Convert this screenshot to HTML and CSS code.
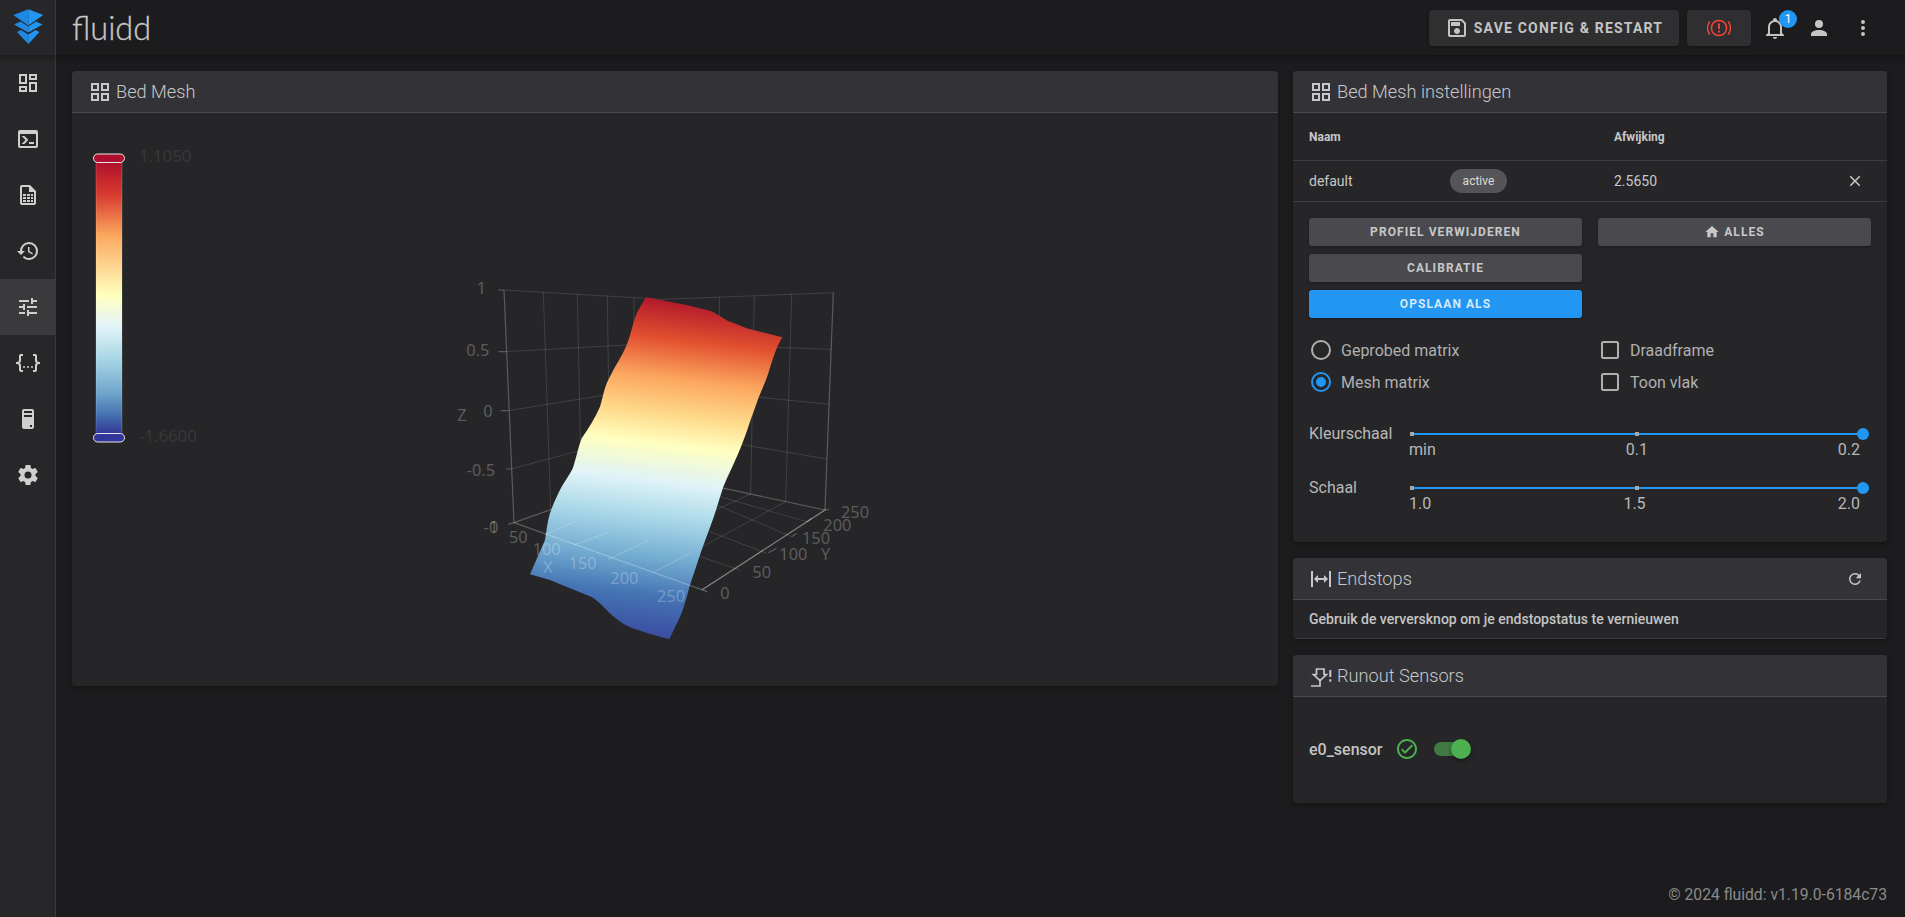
FILE: index.html
```html
<!DOCTYPE html>
<html lang="nl">
<head>
<meta charset="utf-8">
<title>fluidd</title>
<link rel="stylesheet" href="styles.css">
</head>
<body>
<header class="appbar">
  <div class="logo-box">
    <svg class="logo" viewBox="0 0 55 55" width="55" height="55">
      <polygon class="blue-b" points="13.3,15 28.3,9.3 28.3,25.5"/>
      <polygon class="blue-a" points="43.3,15 28.3,9.3 28.3,25.5"/>
      <polygon class="blue-b" points="14,24.5 20.5,21.5 28.3,26.5 28.3,32.5"/>
      <polygon class="blue-a" points="42.5,24.5 36,21.5 28.3,26.5 28.3,32.5"/>
      <polygon class="blue-b" points="17,32 21,30 28.3,34.5 28.3,44"/>
      <polygon class="blue-a" points="39.5,32 35.5,30 28.3,34.5 28.3,44"/>
    </svg>
  </div>
  <div class="brand">fluidd</div>
  <div class="spacer"></div>
  <button class="bar-btn save-btn">
    <svg class="i24" viewBox="0 0 24 24"><path d="M17 3H5C3.89 3 3 3.9 3 5V19C3 20.1 3.89 21 5 21H19C20.1 21 21 20.1 21 19V7L17 3M19 19H5V5H16.17L19 7.83V19M12 12C10.34 12 9 13.34 9 15S10.34 18 12 18 15 16.66 15 15 13.66 12 12 12M6 6H15V10H6V6Z"/></svg>
    <span>SAVE CONFIG &amp; RESTART</span>
  </button>
  <button class="bar-btn brake-btn">
    <svg class="i24 red" viewBox="0 0 24 24"><circle class="ring thin" cx="12" cy="12" r="7.6"/><path class="ring thin" d="M2.8 5.4A11.5 11.5 0 0 0 2.8 18.6M21.2 5.4A11.5 11.5 0 0 1 21.2 18.6"/><path d="M11 7.5H13V13H11ZM11 14.6H13V16.6H11Z"/></svg>
  </button>
  <div class="icon-btn">
    <svg class="i24" viewBox="0 0 24 24"><path d="M10 21H14C14 22.1 13.1 23 12 23S10 22.1 10 21M21 19V20H3V19L5 17V11C5 7.9 7 5.2 10 4.3V4C10 2.9 10.9 2 12 2S14 2.9 14 4V4.3C17 5.2 19 7.9 19 11V17L21 19M17 11C17 8.2 14.8 6 12 6S7 8.2 7 11V18H17V11Z"/></svg>
    <span class="badge">1</span>
  </div>
  <div class="icon-btn">
    <svg class="i24" viewBox="0 0 24 24"><path d="M12,4A4,4 0 0,1 16,8A4,4 0 0,1 12,12A4,4 0 0,1 8,8A4,4 0 0,1 12,4M12,14C16.42,14 20,15.79 20,18V20H4V18C4,15.79 7.58,14 12,14Z"/></svg>
  </div>
  <div class="icon-btn">
    <svg class="i24" viewBox="0 0 24 24"><path d="M12,16A2,2 0 0,1 14,18A2,2 0 0,1 12,20A2,2 0 0,1 10,18A2,2 0 0,1 12,16M12,10A2,2 0 0,1 14,12A2,2 0 0,1 12,14A2,2 0 0,1 10,12A2,2 0 0,1 12,10M12,4A2,2 0 0,1 14,6A2,2 0 0,1 12,8A2,2 0 0,1 10,6A2,2 0 0,1 12,4Z"/></svg>
  </div>
</header>

<div class="shell">
  <nav class="sidebar">
    <a class="nav-item"><svg class="i24" viewBox="0 0 24 24"><path d="M19,5V7H15V5H19M9,5V11H5V5H9M19,13V19H15V13H19M9,17V19H5V17H9M21,3H13V9H21V3M11,3H3V13H11V3M21,11H13V21H21V11M11,15H3V21H11V15Z"/></svg></a>
    <a class="nav-item"><svg class="i24" viewBox="0 0 24 24"><path d="M20,19V7H4V19H20M20,3A2,2 0 0,1 22,5V19A2,2 0 0,1 20,21H4A2,2 0 0,1 2,19V5C2,3.89 2.9,3 4,3H20M13,17V15H18V17H13M9.58,13L5.57,9H8.4L11.7,12.3C12.09,12.69 12.09,13.33 11.7,13.72L8.42,17H5.59L9.58,13Z"/></svg></a>
    <a class="nav-item"><svg class="i24" viewBox="0 0 24 24"><path d="M14 2H6C4.9 2 4 2.9 4 4V20C4 21.1 4.9 22 6 22H18C19.1 22 20 21.1 20 20V8L14 2M18 20H6V4H13V9H18V20M7 11H10V13H7V11M11 11H14V13H11V11M15 11H17V13H15V11M7 14H10V16H7V14M11 14H14V16H11V14M15 14H17V16H15V14M7 17H10V19H7V17M11 17H14V19H11V17M15 17H17V19H15V17Z"/></svg></a>
    <a class="nav-item"><svg class="i24" viewBox="0 0 24 24"><path d="M13.5,8H12V13L16.28,15.54L17,14.33L13.5,12.25V8M13,3A9,9 0 0,0 4,12H1L4.96,16.03L9,12H6A7,7 0 0,1 13,5A7,7 0 0,1 20,12A7,7 0 0,1 13,19C11.07,19 9.32,18.21 8.06,16.94L6.64,18.36C8.27,20 10.5,21 13,21A9,9 0 0,0 22,12A9,9 0 0,0 13,3"/></svg></a>
    <a class="nav-item active"><svg class="i24" viewBox="0 0 24 24"><path d="M3,17V19H9V17H3M3,5V7H13V5H3M13,21V19H21V17H13V15H11V21H13M7,9V11H3V13H7V15H9V9H7M21,13V11H11V13H21M15,9H17V7H21V5H17V3H15V9Z"/></svg></a>
    <a class="nav-item"><svg class="i24" viewBox="0 0 24 24"><path d="M5,3H7V5H5V10A2,2 0 0,1 3,12A2,2 0 0,1 5,14V19H7V21H5C3.93,20.73 3,20.1 3,19V15A2,2 0 0,0 1,13H0V11H1A2,2 0 0,0 3,9V5A2,2 0 0,1 5,3M19,3A2,2 0 0,1 21,5V9A2,2 0 0,0 23,11H24V13H23A2,2 0 0,0 21,15V19A2,2 0 0,1 19,21H17V19H19V14A2,2 0 0,1 21,12A2,2 0 0,1 19,10V5H17V3H19M12,15A1,1 0 0,1 13,16A1,1 0 0,1 12,17A1,1 0 0,1 11,16A1,1 0 0,1 12,15M8,15A1,1 0 0,1 9,16A1,1 0 0,1 8,17A1,1 0 0,1 7,16A1,1 0 0,1 8,15M16,15A1,1 0 0,1 17,16A1,1 0 0,1 16,17A1,1 0 0,1 15,16A1,1 0 0,1 16,15Z"/></svg></a>
    <a class="nav-item"><svg class="i24" viewBox="0 0 24 24"><path d="M8,2H16A2,2 0 0,1 18,4V20A2,2 0 0,1 16,22H8A2,2 0 0,1 6,20V4A2,2 0 0,1 8,2M8,4V6H16V4H8M16,8H8V10H16V8M16,18H14V20H16V18Z"/></svg></a>
    <a class="nav-item"><svg class="i24" viewBox="0 0 24 24"><path d="M12,15.5A3.5,3.5 0 0,1 8.5,12A3.5,3.5 0 0,1 12,8.5A3.5,3.5 0 0,1 15.5,12A3.5,3.5 0 0,1 12,15.5M19.43,12.97C19.47,12.65 19.5,12.33 19.5,12C19.5,11.67 19.47,11.34 19.43,11L21.54,9.37C21.73,9.22 21.78,8.95 21.66,8.73L19.66,5.27C19.54,5.05 19.27,4.96 19.05,5.05L16.56,6.05C16.04,5.66 15.5,5.32 14.87,5.07L14.5,2.42C14.46,2.18 14.25,2 14,2H10C9.75,2 9.54,2.18 9.5,2.42L9.13,5.07C8.5,5.32 7.96,5.66 7.44,6.05L4.95,5.05C4.73,4.96 4.46,5.05 4.34,5.27L2.34,8.73C2.21,8.95 2.27,9.22 2.46,9.37L4.57,11C4.53,11.34 4.5,11.67 4.5,12C4.5,12.33 4.53,12.65 4.57,12.97L2.46,14.63C2.27,14.78 2.21,15.05 2.34,15.27L4.34,18.73C4.46,18.95 4.73,19.03 4.95,18.95L7.44,17.94C7.96,18.34 8.5,18.68 9.13,18.93L9.5,21.58C9.54,21.82 9.75,22 10,22H14C14.25,22 14.46,21.82 14.5,21.58L14.87,18.93C15.5,18.67 16.04,18.34 16.56,17.94L19.05,18.95C19.27,19.03 19.54,18.95 19.66,18.73L21.66,15.27C21.78,15.05 21.73,14.78 21.54,14.63L19.43,12.97Z"/></svg></a>
  </nav>

  <main class="content">
    <div class="columns">
      <section class="card">
        <div class="card-head">
          <svg class="i24" viewBox="0 0 24 24"><path d="M3 11H11V3H3M5 5H9V9H5M13 21H21V13H13M15 15H19V19H15M3 21H11V13H3M5 15H9V19H5M13 3V11H21V3M19 9H15V5H19Z"/></svg>
          <h2>Bed Mesh</h2>
        </div>
        <svg class="chart" viewBox="0 0 1206 573" width="1206" height="573">
          <defs>
            <linearGradient id="barGrad" x1="0" y1="0" x2="0" y2="1">
              <stop offset="0" stop-color="#b0102c"/>
              <stop offset="0.12" stop-color="#d73a2e"/>
              <stop offset="0.27" stop-color="#fca85e"/>
              <stop offset="0.49" stop-color="#ffffbf"/>
              <stop offset="0.60" stop-color="#e4f4f8"/>
              <stop offset="0.72" stop-color="#a9d8e6"/>
              <stop offset="0.85" stop-color="#6fa5cc"/>
              <stop offset="0.93" stop-color="#4472b0"/>
              <stop offset="1" stop-color="#313695"/>
            </linearGradient>
            <linearGradient id="meshGrad" gradientUnits="userSpaceOnUse" x1="650" y1="60" x2="530" y2="1120">
              <stop offset="0.02" stop-color="#b2182b"/>
              <stop offset="0.13" stop-color="#e2502f"/>
              <stop offset="0.24" stop-color="#fca65f"/>
              <stop offset="0.34" stop-color="#fed98a"/>
              <stop offset="0.425" stop-color="#ffffbf"/>
              <stop offset="0.53" stop-color="#e0f3f8"/>
              <stop offset="0.63" stop-color="#abd9e9"/>
              <stop offset="0.745" stop-color="#74add1"/>
              <stop offset="0.85" stop-color="#4575b4"/>
              <stop offset="0.98" stop-color="#3a48a0"/>
            </linearGradient>
          </defs>

          <rect class="bar" x="24" y="49" width="26" height="272" fill="url(#barGrad)"/>
          <rect class="handle" x="21.5" y="41" width="31" height="8.5" rx="4.2" fill="#ad0f2e"/>
          <rect class="handle" x="21.5" y="320.5" width="31" height="8.5" rx="4.2" fill="#32359a"/>
          <text class="bar-label" x="67" y="42">1.1050</text>
          <text class="bar-label" x="67" y="322">-1.6600</text>

          <g transform="translate(358 157) scale(0.33333)">
            <g class="grid">
              <path d="M222 60L700 88L1210 68M228 245L680 220L1203 238M235 422L680 350L1197 403M243 597L680 480L1190 567"/>
              <path d="M340 67L362 718M442 73L455 686M532 78L540 656M612 83L612 632M700 88L671 610M868 82L868 650M973 78L962 672M1085 73L1067 695"/>
              <path d="M435 755L775 630M535 787L868 650M655 812L962 672M780 850L1067 695M870 680L1130 755M860 705L1085 800M840 785L1010 850M780 850L930 900"/>
            </g>
            <g class="axis">
              <path d="M222 60L252 758M1210 68L1185 720"/>
              <path d="M252 758L671 610L1185 720L815 960"/>
              <path d="M235 763L252 758M1185 720L1197 718M205 245L228 245M212 422L235 422M228 597L243 597M205 60L222 60"/>
            </g>
            <path fill="url(#meshGrad)" d="M648 82L690 90L770 105L840 122C870 135 880 148 905 157L950 175L1010 190L1057 202C1040 230 1030 260 1015 310C1005 340 995 360 985 385C975 415 965 440 955 470C945 500 935 525 925 550C910 585 895 615 880 650C870 680 860 715 850 745L815 840L780 945C770 980 762 1015 750 1040L718 1108L660 1092L600 1072C565 1055 545 1035 520 1010C500 990 490 982 470 975L420 955L360 930L300 913L345 810C350 780 352 755 360 730C370 700 382 675 395 650C410 625 422 610 430 590C440 560 445 530 455 505C475 475 495 445 510 410C518 385 522 360 530 340L545 310C560 280 578 255 590 225C598 205 603 185 610 160C615 145 618 132 625 120Z"/>
            <g class="grid over">
              <path d="M435 755L345 795M535 787L430 825M655 812L535 868M780 850L668 908"/>
            </g>
            <g class="axis">
              <path d="M252 758L832 965M815 960L932 885"/>
              <path d="M932 885L1185 720"/>
              <path d="M1015 848L1040 835M1085 800L1100 790M1130 755L1145 745"/>
            </g>
            <g class="ticks">
              <text x="168" y="53" text-anchor="end">1</text>
              <text x="178" y="241" text-anchor="end">0.5</text>
              <text x="188" y="423" text-anchor="end">0</text>
              <text x="195" y="600" text-anchor="end">-0.5</text>
              <text x="205" y="770" text-anchor="end">-1</text>
              <text x="205" y="770" text-anchor="end">0</text>
              <text x="96" y="435" text-anchor="middle">Z</text>
              <text x="265" y="802" text-anchor="middle">50</text>
              <text x="350" y="838" text-anchor="middle">100</text>
              <text x="458" y="880" text-anchor="middle">150</text>
              <text x="583" y="925" text-anchor="middle">200</text>
              <text x="723" y="977" text-anchor="middle">250</text>
              <text x="353" y="890" text-anchor="middle">X</text>
              <text x="885" y="970" text-anchor="middle">0</text>
              <text x="995" y="907" text-anchor="middle">50</text>
              <text x="1090" y="852" text-anchor="middle">100</text>
              <text x="1158" y="805" text-anchor="middle">150</text>
              <text x="1222" y="765" text-anchor="middle">200</text>
              <text x="1275" y="727" text-anchor="middle">250</text>
              <text x="1187" y="852" text-anchor="middle">Y</text>
            </g>
          </g>
        </svg>
      </section>

      <div class="side">
        <section class="card">
          <div class="card-head">
            <svg class="i24" viewBox="0 0 24 24"><path d="M3 11H11V3H3M5 5H9V9H5M13 21H21V13H13M15 15H19V19H15M3 21H11V13H3M5 15H9V19H5M13 3V11H21V3M19 9H15V5H19Z"/></svg>
            <h2>Bed Mesh instellingen</h2>
          </div>
          <div class="table-row table-head">
            <span class="col-name">Naam</span>
            <span class="col-chip"></span>
            <span class="col-dev">Afwijking</span>
          </div>
          <div class="table-row table-body">
            <span class="col-name">default</span>
            <span class="col-chip"><span class="chip">active</span></span>
            <span class="col-dev">2.5650</span>
            <svg class="i18 close" viewBox="0 0 24 24"><path d="M19,6.41L17.59,5L12,10.59L6.41,5L5,6.41L10.59,12L5,17.59L6.41,19L12,13.41L17.59,19L19,17.59L13.41,12L19,6.41Z"/></svg>
          </div>
          <div class="actions">
            <div class="btn-col">
              <button class="btn">PROFIEL VERWIJDEREN</button>
              <button class="btn">CALIBRATIE</button>
              <button class="btn primary">OPSLAAN ALS</button>
            </div>
            <div class="btn-col">
              <button class="btn"><svg class="i16" viewBox="0 0 24 24"><path d="M10,20V14H14V20H19V12H22L12,3L2,12H5V20H10Z"/></svg>ALLES</button>
            </div>
          </div>
          <div class="options">
            <label class="opt"><svg class="i24" viewBox="0 0 24 24"><circle class="ring" cx="12" cy="12" r="9"/></svg>Geprobed matrix</label>
            <label class="opt"><svg class="i24" viewBox="0 0 24 24"><rect class="ring" x="4" y="4" width="16" height="16" rx="1.5"/></svg>Draadframe</label>
            <label class="opt"><svg class="i24 blue" viewBox="0 0 24 24"><circle class="ring" cx="12" cy="12" r="9"/><circle cx="12" cy="12" r="5"/></svg>Mesh matrix</label>
            <label class="opt"><svg class="i24" viewBox="0 0 24 24"><rect class="ring" x="4" y="4" width="16" height="16" rx="1.5"/></svg>Toon vlak</label>
          </div>
          <div class="slider first">
            <span class="slider-label">Kleurschaal</span>
            <div class="slider-box">
              <div class="track"><i class="tick start"></i><i class="tick mid"></i><i class="thumb"></i></div>
              <div class="slider-ticks"><span>min</span><span>0.1</span><span>0.2</span></div>
            </div>
          </div>
          <div class="slider last">
            <span class="slider-label">Schaal</span>
            <div class="slider-box">
              <div class="track"><i class="tick start"></i><i class="tick mid"></i><i class="thumb"></i></div>
              <div class="slider-ticks"><span>1.0</span><span>1.5</span><span>2.0</span></div>
            </div>
          </div>
        </section>

        <section class="card">
          <div class="card-head">
            <svg class="i24" viewBox="0 0 24 24"><path d="M9,11H15V8L19,12L15,16V13H9V16L5,12L9,8V11M2,20V4H4V20H2M20,20V4H22V20H20Z"/></svg>
            <h2>Endstops</h2>
            <svg class="i18 head-action" viewBox="0 0 24 24"><path d="M17.65,6.35C16.2,4.9 14.21,4 12,4A8,8 0 0,0 4,12A8,8 0 0,0 12,20C15.73,20 18.84,17.45 19.73,14H17.65C16.83,16.33 14.61,18 12,18A6,6 0 0,1 6,12A6,6 0 0,1 12,6C13.66,6 15.14,6.69 16.22,7.78L13,11H20V4L17.65,6.35Z"/></svg>
          </div>
          <p class="endstop-text">Gebruik de verversknop om je endstopstatus te vernieuwen</p>
        </section>

        <section class="card">
          <div class="card-head">
            <svg class="i24" viewBox="0 0 24 24"><path class="ring nozzle" d="M7.5 5H15V10.5H17.5L11 16.7L4.5 10.5H7.5ZM11 16.7V22H2"/><path d="M20.3 6H22.3V13H20.3ZM20.3 15.3H22.3V17.7H20.3Z"/></svg>
            <h2>Runout Sensors</h2>
          </div>
          <div class="sensor-body">
            <span class="sensor-name">e0_sensor</span>
            <svg class="i24 green" viewBox="0 0 24 24"><path d="M12 2C6.5 2 2 6.5 2 12S6.5 22 12 22 22 17.5 22 12 17.5 2 12 2M12 20C7.59 20 4 16.41 4 12S7.59 4 12 4 20 7.59 20 12 16.41 20 12 20M16.59 7.58L10 14.17L7.41 11.59L6 13L10 17L18 9L16.59 7.58Z"/></svg>
            <span class="switch"><i class="switch-knob"></i></span>
          </div>
        </section>
      </div>
    </div>
    <footer class="foot">© 2024 fluidd: v1.19.0-6184c73</footer>
  </main>
</div>
</body>
</html>
```
FILE: styles.css
```css
* { box-sizing: border-box; }
html, body { height: 100%; }
body {
  margin: 0;
  background: #1c1c1e;
  color: #c4c4c4;
  font-family: Roboto, "Liberation Sans", sans-serif;
  font-size: 14px;
  overflow: hidden;
  display: flex;
  flex-direction: column;
}
svg { display: block; fill: currentColor; flex: none; }
.i16 { width: 16px; height: 16px; }
.i18 { width: 18px; height: 18px; }
.i24 { width: 24px; height: 24px; }
.ring { fill: none; stroke: currentColor; stroke-width: 2; }
.ring.thin { stroke-width: 1.5; }
.ring.nozzle { stroke-width: 1.7; }

/* app bar */
.appbar {
  height: 55px;
  flex: none;
  display: flex;
  align-items: center;
  background: #1c1c1e;
  box-shadow: 0 2px 6px rgba(0, 0, 0, .35);
  position: relative;
  z-index: 2;
  padding-right: 20px;
}
.logo-box {
  width: 56px;
  height: 55px;
  background: #272729;
  border-right: 1px solid #3a3a3c;
}
.logo { width: 55px; height: 55px; }
.blue-a { fill: #2196f3; }
.blue-b { fill: #1e88e5; }
.brand {
  margin-left: 16px;
  font-family: Lato, sans-serif;
  font-weight: 300;
  font-size: 32.5px;
  -webkit-text-stroke: .3px #c8c8c8;
  color: #c8c8c8;
  line-height: 55px;
}
.spacer { flex: 1; }
.bar-btn {
  height: 36px;
  border: 0;
  border-radius: 4px;
  background: #2f2f31;
  color: #c4c4c4;
  font-family: inherit;
  display: flex;
  align-items: center;
  justify-content: center;
  box-shadow: 0 1px 3px rgba(0, 0, 0, .3);
}
.save-btn {
  width: 250px;
  gap: 5px;
  font-size: 14px;
  font-weight: 700;
  letter-spacing: 1.2px;
  margin-right: 8px;
}
.brake-btn { width: 64px; margin-right: 2px; }
.red { color: #f44336; }
.icon-btn {
  width: 44px;
  height: 44px;
  display: flex;
  align-items: center;
  justify-content: center;
  position: relative;
}
.badge {
  position: absolute;
  left: 26px;
  top: 4px;
  width: 18px;
  height: 18px;
  border-radius: 50%;
  background: #2196f3;
  color: #fff;
  font-size: 12px;
  line-height: 18px;
  text-align: center;
}

/* shell */
.shell { flex: 1; display: flex; min-height: 0; }
.sidebar {
  width: 56px;
  flex: none;
  background: #272729;
  border-right: 1px solid #3a3a3c;
}
.nav-item {
  height: 56px;
  display: flex;
  align-items: center;
  justify-content: center;
  color: #cfcfcf;
}
.nav-item.active { background: #3a3a3c; }
.content {
  flex: 1;
  padding: 16px 18px 0 16px;
  display: flex;
  flex-direction: column;
  min-width: 0;
}
.columns {
  flex: 1;
  display: grid;
  grid-template-columns: 1206px 594px;
  column-gap: 15px;
  align-items: start;
}
.side { display: flex; flex-direction: column; gap: 16px; }
.foot {
  flex: none;
  height: 34px;
  text-align: right;
  color: #8a8a8a;
  font-size: 15.7px;
  line-height: 24px;
}

/* cards */
.card {
  background: #262628;
  border-radius: 4px;
  box-shadow: 0 2px 4px rgba(0, 0, 0, .3);
  overflow: hidden;
}
.card-head {
  height: 42px;
  display: flex;
  align-items: center;
  padding: 0 16px;
  background: #333337;
  border-bottom: 1px solid #4a4a4c;
  color: #c8c8c8;
}
.card-head h2 {
  margin: 0 0 0 4px;
  font-size: 18.2px;
  font-weight: 300;
  flex: 1;
}
.head-action { margin-right: 7px; }

/* chart */
.chart { display: block; }
.bar { stroke: rgba(255, 255, 255, .18); stroke-width: 1; }
.handle { stroke: #e8e8e8; stroke-width: 1; }
.bar-label { font-family: "Open Sans", sans-serif; font-size: 16.8px; fill: #39393b; dominant-baseline: central; }
.grid path { fill: none; stroke: rgba(255, 255, 255, .13); stroke-width: 3; }
.grid.over path { stroke: rgba(255, 255, 255, .22); }
.axis path { fill: none; stroke: rgba(255, 255, 255, .25); stroke-width: 3.5; }
.ticks text {
  font-family: "Open Sans", sans-serif;
  font-size: 49px;
  fill: rgba(255, 255, 255, .27);
  dominant-baseline: central;
}

/* table */
.table-row {
  display: flex;
  align-items: center;
  padding: 0 16px;
  border-bottom: 1px solid #3d3d3f;
  color: #c8c8c8;
}
.table-head { height: 48px; font-size: 12px; font-weight: 700; }
.table-body { height: 41px; font-size: 14px; }
.col-name { width: 141px; }
.col-chip { width: 164px; }
.col-dev { flex: 1; }
.chip {
  display: inline-block;
  width: 57px;
  height: 24px;
  border-radius: 12px;
  background: #555557;
  color: #dcdcdc;
  text-align: center;
  font-size: 12px;
  line-height: 24px;
}
.close { margin-right: 7px; }

/* buttons */
.actions {
  display: grid;
  grid-template-columns: 273px 273px;
  column-gap: 16px;
  padding: 16px 16px 0;
}
.btn-col { display: flex; flex-direction: column; gap: 8px; }
.btn {
  height: 28px;
  border: 0;
  border-radius: 3px;
  background: #4a4a4e;
  color: #c8c8c8;
  font-family: inherit;
  font-size: 12px;
  font-weight: 700;
  letter-spacing: 1.07px;
  display: flex;
  align-items: center;
  justify-content: center;
  gap: 4px;
  box-shadow: 0 1px 3px rgba(0, 0, 0, .3);
}
.btn.primary { background: #2196f3; color: #d5e8f7; }

/* options */
.options {
  display: grid;
  grid-template-columns: 289px 1fr;
  padding: 16px 16px 0;
}
.opt {
  height: 32px;
  display: flex;
  align-items: center;
  gap: 8px;
  font-size: 16px;
  color: #b0b0b0;
}
.blue { color: #2196f3; }

/* sliders */
.slider { display: flex; padding: 0 16px; }
.slider.first { margin-top: 26px; }
.slider.last { margin-top: 18px; padding-bottom: 28px; }
.slider-label { width: 102px; line-height: 20px; font-size: 16px; color: #b8b8b8; }
.slider-box { flex: 1; margin-right: 8px; }
.track { height: 20px; position: relative; }
.track::before {
  content: "";
  position: absolute;
  left: 0;
  right: 0;
  top: 9px;
  height: 2px;
  background: #2196f3;
}
.tick {
  position: absolute;
  top: 8px;
  width: 4px;
  height: 4px;
  background: #a8a8a8;
}
.tick.start { left: -1px; }
.tick.mid { left: 50%; margin-left: -2px; }
.thumb {
  position: absolute;
  right: -6px;
  top: 4px;
  width: 12px;
  height: 12px;
  border-radius: 50%;
  background: #2196f3;
}
.slider-ticks {
  display: flex;
  justify-content: space-between;
  margin: -4px 3px 0 -2px;
  line-height: 20px;
  font-size: 16px;
  color: #b8b8b8;
}

/* endstops */
.endstop-text {
  margin: 0;
  height: 39px;
  padding: 0 16px;
  font-size: 14px;
  font-weight: 500;
  line-height: 38px;
  color: #c4c4c4;
  border-bottom: 1px solid #3d3d3f;
}

/* sensor */
.sensor-body {
  height: 106px;
  display: flex;
  align-items: center;
  padding: 0 16px 2px;
}
.sensor-name { font-size: 16px; font-weight: 500; color: #c4c4c4; }
.green { color: #4caf50; margin-left: 12px; }
.switch {
  width: 32px;
  height: 14px;
  margin-left: 15px;
  border-radius: 7px;
  background: #3f7a42;
  position: relative;
}
.switch-knob {
  position: absolute;
  left: 17px;
  top: -3px;
  width: 20px;
  height: 20px;
  border-radius: 50%;
  background: #4caf50;
  box-shadow: 0 2px 4px rgba(0, 0, 0, .4);
}
```
